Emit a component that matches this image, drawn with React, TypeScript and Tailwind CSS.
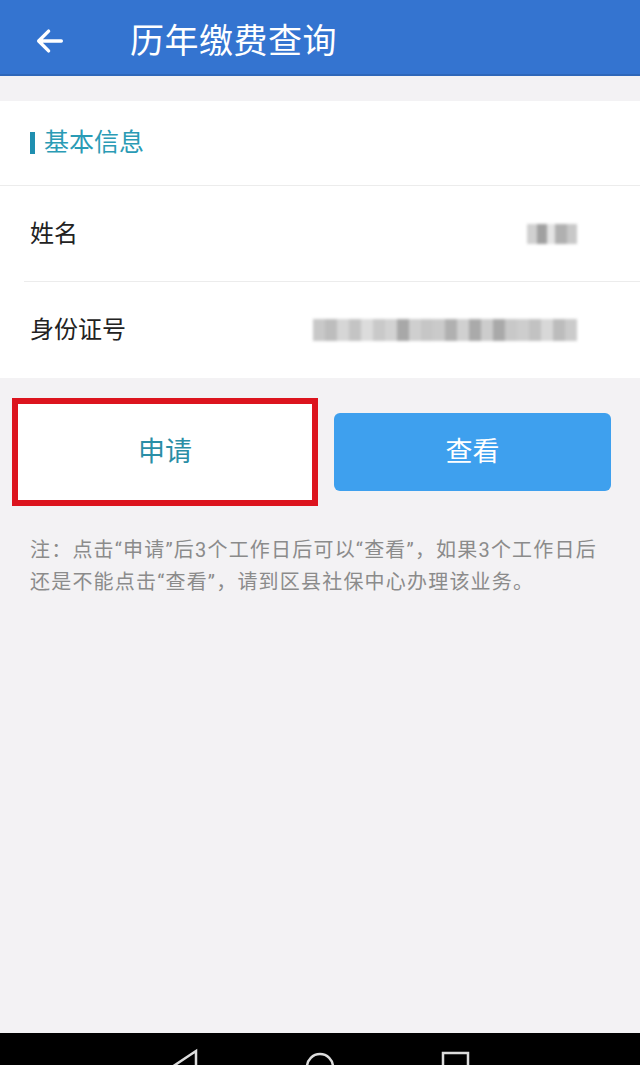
import { useState } from "react";

const cjk = "font-['Roboto','Noto_Sans_CJK_SC',sans-serif]";

function BlurValue({ cells }: { cells: string[] }) {
  return (
    <div className="flex items-center h-[26px] blur-[1.5px]">
      {cells.map((c, i) => (
        <div key={i} className={"h-[22px] w-[12px] " + c} />
      ))}
    </div>
  );
}

function InfoRow({ label, children, border }: any) {
  return (
    <div className="pl-[24px]">
      <div
        className={
          "h-[96px] flex items-center justify-between pl-[6px] pr-[63px] " +
          (border ? "border-b border-[#ececec]" : "")
        }
      >
        <span className="text-[24px] text-[#222]">{label}</span>
        {children}
      </div>
    </div>
  );
}

export default function App() {
  const [applied, setApplied] = useState(false);

  const idCells = [
    "bg-[#c8c8c8]", "bg-[#bdbdbd]", "bg-[#d6d6d6]", "bg-[#c4c4c4]", "bg-[#dcdcdc]",
    "bg-[#c9c9c9]", "bg-[#d2d2d2]", "bg-[#a8a8a8]", "bg-[#cfcfcf]", "bg-[#c6c6c6]",
    "bg-[#cacaca]", "bg-[#b0b0b0]", "bg-[#d0d0d0]", "bg-[#aaaaaa]", "bg-[#cccccc]",
    "bg-[#a9a9a9]", "bg-[#c8c8c8]", "bg-[#cdcdcd]", "bg-[#c2c2c2]", "bg-[#d8d8d8]",
    "bg-[#bcbcbc]", "bg-[#cbcbcb]",
  ];

  return (
    <div className={"w-[640px] h-[1065px] bg-[#f3f2f4] flex flex-col " + cjk}>
      {/* header */}
      <div className="h-[76px] bg-[#3474d0] border-b-2 border-[#2e67b9] flex items-center pt-[8px] shrink-0">
        <svg width="34" height="34" viewBox="0 0 24 24" className="ml-[33px]">
          <path
            d="M20 12H5M11 5l-7 7 7 7"
            fill="none"
            stroke="white"
            strokeWidth="2.4"
            strokeLinecap="round"
            strokeLinejoin="round"
          />
        </svg>
        <h1 className="ml-[63px] text-[34px] text-white tracking-[0.5px]">历年缴费查询</h1>
      </div>

      {/* info card */}
      <div className="mt-[25px] bg-white">
        <div className="h-[85px] flex items-center px-[30px] border-b border-[#ececec]">
          <span className="w-[5px] h-[22px] bg-[#1f8fb0] mr-[9px]" />
          <span className="text-[25px] text-[#2a9bb5]">基本信息</span>
        </div>
        <InfoRow label="姓名" border>
          <div className="flex items-center h-[26px] blur-[1.5px]">
            <div className="h-[20px] w-[10px] bg-[#d0d0d0]" />
            <div className="h-[20px] w-[10px] bg-[#a0a0a0]" />
            <div className="h-[20px] w-[8px] bg-[#e4e4e4]" />
            <div className="h-[20px] w-[12px] bg-[#b0b0b0]" />
            <div className="h-[20px] w-[10px] bg-[#c8c8c8]" />
          </div>
        </InfoRow>
        <InfoRow label="身份证号">
          <BlurValue cells={idCells} />
        </InfoRow>
      </div>

      {/* buttons */}
      <div className="flex items-center mt-[20px] pl-[12px] gap-[16px]">
        <div className="border-[6px] border-[#dc141e]">
          <button
            onClick={() => setApplied(!applied)}
            className="w-[294px] h-[96px] bg-white text-[27px] text-[#2a8ea6]"
          >
            申请
          </button>
        </div>
        <button className="w-[277px] h-[78px] bg-[#3ea0ee] rounded-[6px] text-[27px] text-white">
          查看
        </button>
      </div>

      {/* note */}
      <p className="mt-[28px] px-[30px] text-[20px] leading-[32px] tracking-[1.2px] text-[#8b8b8b] whitespace-nowrap">
        注：点击“申请”后3个工作日后可以“查看”，如果3个工作日后
        <br />
        还是不能点击“查看”，请到区县社保中心办理该业务。
      </p>

      <div className="flex-1" />

      {/* android nav bar */}
      <div className="h-[32px] bg-black shrink-0 overflow-hidden">
        <svg width="640" height="32" className="block">
          <path d="M196 18 L172 34 L196 50 Z" fill="none" stroke="#ddd" strokeWidth="2.5" />
          <circle cx="320" cy="34" r="13" fill="none" stroke="#ddd" strokeWidth="2.5" />
          <rect x="443" y="20" width="25" height="25" fill="none" stroke="#ddd" strokeWidth="2.5" />
        </svg>
      </div>
    </div>
  );
}
